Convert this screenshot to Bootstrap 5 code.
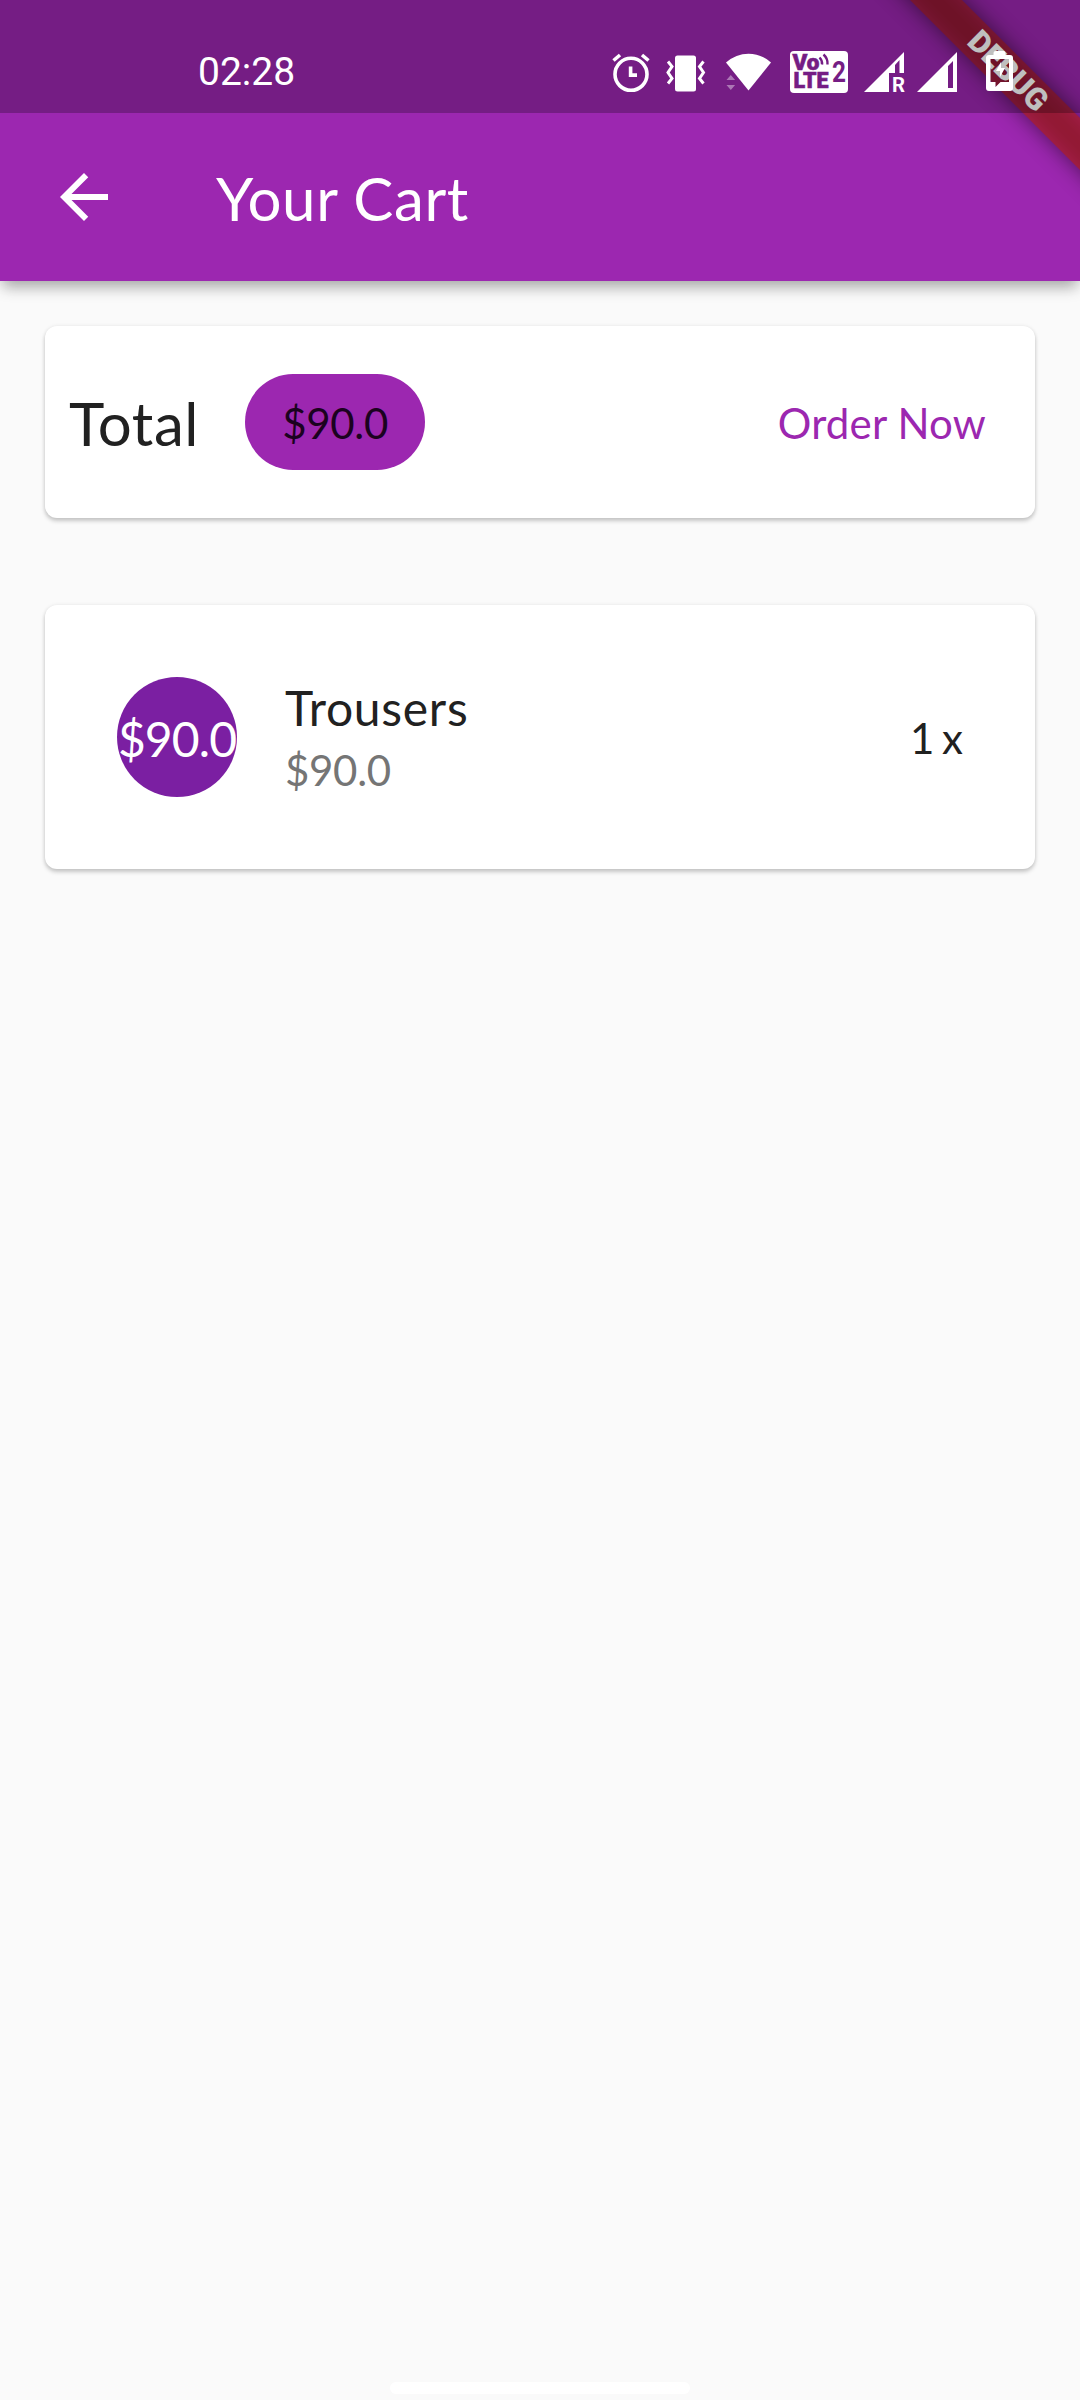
<!DOCTYPE html>
<html lang="en">
<head>
<meta charset="utf-8">
<meta name="viewport" content="width=device-width, initial-scale=1">
<title>Your Cart</title>
<link href="https://cdn.jsdelivr.net/npm/bootstrap@5.3.0/dist/css/bootstrap.min.css" rel="stylesheet">
<style>
  body { background: #fafafa; font-family: Lato, sans-serif; color: #212121; line-height: 1.2; }
  .screen { width: 1080px; height: 2400px; overflow: hidden; }
  .top-area { background: #9c27b0; box-shadow: 0 9px 14px -3px rgba(0,0,0,.3), 0 2px 16px rgba(0,0,0,.07); }
  .status-strip { height: 113px; background: rgba(0,0,0,.25); padding: 44px 60px 0 198px; z-index: 3; }
  .clock { font: 400 39px/1 Roboto, sans-serif; padding-top: 9px; }
  .status-icons { width: 414px; height: 54px; }
  .app-bar { height: 168px; padding-left: 60px; gap: 108px; }
  .txt-60 { font-size: 60px; letter-spacing: .6px; padding-top: 2px; }
  .txt-48 { font-size: 48px; letter-spacing: .7px; }
  .txt-42 { font-size: 42px; }
  .price { letter-spacing: -.3px; padding-top: 2px; }
  .ribbon { right: 0; top: 0; z-index: 2; }
  .cart-body { padding: 45px; gap: 87px; }
  .tile { border: 0; border-radius: 12px; box-shadow: 0 3px 4px rgba(0,0,0,.2), 0 0 4px rgba(0,0,0,.07); }
  .total-tile { height: 192px; padding: 0 24px; }
  .item-tile { height: 264px; padding: 0 72px; }
  .chip { width: 180px; height: 96px; background: #9c27b0; color: #1b0220; margin-left: 46px; }
  .order-btn { color: #9c27b0; border: 0; padding: 2px 25px 0; line-height: 1.2; letter-spacing: .2px; }
  .avatar { width: 120px; height: 120px; background: #7b1fa2; margin-right: 48px; padding-top: 4px; letter-spacing: -.9px; }
  .item-lines { gap: 7px; }
  .muted { color: #757575; }
  .qty { word-spacing: -3px; padding-top: 2px; }
  .home-pill { width: 300px; height: 12px; background: #fff; margin-bottom: 6px; }
</style>
</head>
<body>
<div class="screen d-flex flex-column position-relative">
  <header class="top-area position-relative text-white">
    <div class="status-strip d-flex justify-content-between align-items-start position-relative">
      <span class="clock">02:28</span>
      <svg class="status-icons" viewBox="606 44 414 54" fill="#fff">
        <!-- alarm -->
        <g fill="none" stroke="#fff" stroke-width="3.6">
          <circle cx="631" cy="74.3" r="16"/>
          <path d="M630.6 66.5v8.600h6.400M613.500 60.500l6.500-5.500M648.500 60.500l-6.500-5.500" />
        </g>
        <!-- vibrate -->
        <rect x="675" y="55.500" width="21" height="36" rx="2.500"/>
        <path d="M668 61.500l4 5-4 6 4 6-4 5M703.500 61.500l-4 5 4 6-4 6 4 5" fill="none" stroke="#fff" stroke-width="3"/>
        <!-- wifi -->
        <path d="M726 62.500Q736 53.700 748.500 53.700T771 62.500L748.500 90.500z"/>
        <path d="M726.500 80l4.300-5 4.300 5zM726.500 85h8.600l-4.300 5z" opacity=".4"/>
        <!-- volte -->
        <rect x="790" y="51" width="58" height="42" rx="4"/>
        <g fill="#751d84" stroke="#751d84" stroke-width=".6" font-family="Roboto, sans-serif" font-weight="900">
          <text x="792.500" y="70" font-size="22" textLength="27" lengthAdjust="spacingAndGlyphs">Vo</text>
          <text x="793.500" y="88.300" font-size="22" textLength="35" lengthAdjust="spacingAndGlyphs">LTE</text>
          <text x="832" y="82.300" font-size="29.500" font-weight="700" stroke="none" textLength="14" lengthAdjust="spacingAndGlyphs">2</text>
        </g>
        <path d="M819.500 57.500q3 3 2.500 7M823.500 54.500q4.500 4 4 10" fill="none" stroke="#751d84" stroke-width="2.400"/>
        <!-- signal, roaming -->
        <path d="M864 92L904 52V73H899.500V60L895 65V73H889V92z"/>
        <text x="892" y="92" font-family="Roboto, sans-serif" font-weight="700" font-size="20" textLength="13" lengthAdjust="spacingAndGlyphs">R</text>
        <!-- signal -->
        <path fill-rule="evenodd" d="M917 92L957 52V92zM948 66V88H953V61z"/>
        <!-- battery -->
        <path fill-rule="evenodd" d="M993.500 55V53q0-2 2-2h8q2 0 2 2v2h4.500q3 0 3 3V88q0 3-3 3H989q-3 0-3-3V58q0-3 3-3zM990.500 59V82H995.500V87L1000.500 82H1009V59z"/>
        <path d="M1001 62l-5 9h4v6l5-9h-4z"/>
      </svg>
    </div>
    <div class="app-bar d-flex align-items-center">
      <svg width="48" height="48" viewBox="0 0 16 16" fill="#fff"><path d="M16 7H3.830l5.590-5.590L8 0 0 8l8 8 1.410-1.410L3.830 9H16z"/></svg>
      <span class="txt-60">Your Cart</span>
    </div>
    <svg class="ribbon position-absolute" width="220" height="220" viewBox="860 0 220 220">
      <defs><filter id="soft" x="-50%" y="-50%" width="200%" height="200%"><feGaussianBlur stdDeviation="11"/></filter></defs>
      <path d="M860-50H912L1130 168V220L860-50z" fill="#000" opacity=".5" filter="url(#soft)"/>
      <path d="M910 0H962L1080 118V170z" fill="#b71c1c" fill-opacity=".63"/>
      <text transform="translate(1008.500 70.500) rotate(45)" x="0" y="11" text-anchor="middle" font-family="Roboto, sans-serif" font-weight="900" font-size="31" fill="#fff">DEBUG</text>
    </svg>
  </header>
  <main class="cart-body d-flex flex-column flex-grow-1">
    <section class="card tile total-tile flex-row align-items-center">
      <span class="txt-60">Total</span>
      <span class="chip price txt-42 rounded-pill d-flex align-items-center justify-content-center">$90.0</span>
      <button type="button" class="btn order-btn txt-42 ms-auto">Order Now</button>
    </section>
    <section class="card tile item-tile flex-row align-items-center">
      <span class="avatar txt-48 rounded-circle text-white d-flex align-items-center justify-content-center">$90.0</span>
      <div class="item-lines d-flex flex-column">
        <span class="txt-48">Trousers</span>
        <span class="txt-42 price muted">$90.0</span>
      </div>
      <span class="qty txt-42 ms-auto">1 x</span>
    </section>
  </main>
  <div class="home-pill rounded-pill align-self-center"></div>
</div>
<script src="https://cdn.jsdelivr.net/npm/bootstrap@5.3.0/dist/js/bootstrap.bundle.min.js"></script>
</body>
</html>
